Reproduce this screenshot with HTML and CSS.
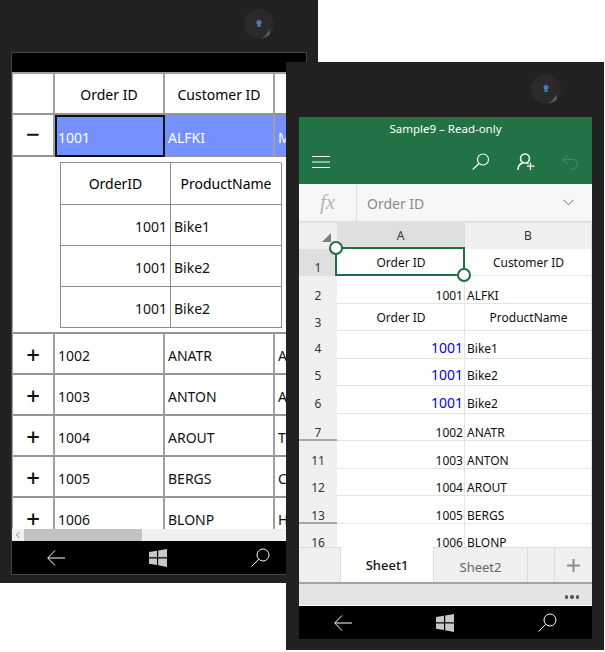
FILE: index.html
```html
<!DOCTYPE html>
<html lang="en">
<head>
  <meta charset="UTF-8">
  <title>Grid to Excel export</title>
  <link rel="stylesheet" href="styles.css">
</head>
<body>

  <!-- Phone with the data grid -->
  <div class="phone phone-grid">
    <svg class="camera" width="32" height="32" viewBox="0 0 32 32">
      <circle cx="16" cy="16" r="15" fill="#2a2a2c"/>
      <path d="M26 21 L27 26 A15 15 0 0 1 18 30.500 Q24 28 26 21Z" fill="#5f5f62"/>
      <circle cx="16" cy="14.500" r="2.500" fill="#5a6fc0"/>
      <rect x="14.500" y="17" width="3" height="2" fill="#0f9f8f"/>
    </svg>
    <div class="screen">
      <div class="topbar"></div>
      <div class="grid-body">
        <div class="grid-row row-head">
          <div class="cell"></div>
          <div class="cell head">Order ID</div>
          <div class="cell head">Customer ID</div>
          <div class="cell last"></div>
        </div>
        <div class="grid-row row-selected">
          <div class="cell toggle toggle-plain">&minus;</div>
          <div class="cell current">1001</div>
          <div class="cell">ALFKI</div>
          <div class="cell last">M</div>
        </div>
        <div class="detail">
          <div class="subgrid">
            <div class="subcell head">OrderID</div>
            <div class="subcell head">ProductName</div>
            <div class="subcell num">1001</div>
            <div class="subcell">Bike1</div>
            <div class="subcell num">1001</div>
            <div class="subcell">Bike2</div>
            <div class="subcell num">1001</div>
            <div class="subcell">Bike2</div>
          </div>
        </div>
        <div class="grid-row">
          <div class="cell toggle">+</div>
          <div class="cell">1002</div>
          <div class="cell">ANATR</div>
          <div class="cell last">A</div>
        </div>
        <div class="grid-row">
          <div class="cell toggle">+</div>
          <div class="cell">1003</div>
          <div class="cell">ANTON</div>
          <div class="cell last">A</div>
        </div>
        <div class="grid-row">
          <div class="cell toggle">+</div>
          <div class="cell">1004</div>
          <div class="cell">AROUT</div>
          <div class="cell last">T</div>
        </div>
        <div class="grid-row">
          <div class="cell toggle">+</div>
          <div class="cell">1005</div>
          <div class="cell">BERGS</div>
          <div class="cell last">C</div>
        </div>
        <div class="grid-row">
          <div class="cell toggle">+</div>
          <div class="cell">1006</div>
          <div class="cell">BLONP</div>
          <div class="cell last">H</div>
        </div>
      </div>
      <div class="scrollbar">
        <div class="scroll-arrow">
          <svg width="6" height="8" viewBox="0 0 6 8"><path d="M4.500 1 L1.500 4 L4.500 7" fill="none" stroke="#8a8a8a"/></svg>
        </div>
        <div class="scroll-thumb"></div>
      </div>
      <div class="navbar nav-left">
        <svg width="18" height="16" viewBox="0 0 18 16"><path d="M18 8H1M8 .5 L.7 8 L8 15.500" fill="none" stroke="#fff" stroke-width="1"/></svg>
        <svg width="18" height="18" viewBox="0 0 18 18"><path d="M0 3 L8 1.800 V8.300 H0Z M9.200 1.600 L18 0 V8.300 H9.200Z M0 9.600 H8 V16 L0 14.800Z M9.200 9.600 H18 V18 L9.200 16.300Z" fill="#c8c8c8"/></svg>
        <svg width="19" height="19" viewBox="0 0 19 19"><circle cx="12" cy="7" r="6" fill="none" stroke="#fff"/><path d="M7.800 11.300 L0.500 18.500" stroke="#fff"/></svg>
      </div>
    </div>
  </div>

  <!-- Phone with the exported workbook -->
  <div class="phone phone-excel">
    <svg class="camera" width="32" height="32" viewBox="0 0 32 32">
      <circle cx="16" cy="16" r="15" fill="#2a2a2c"/>
      <path d="M26 21 L27 26 A15 15 0 0 1 18 30.500 Q24 28 26 21Z" fill="#5f5f62"/>
      <circle cx="16" cy="14.500" r="2.500" fill="#5a6fc0"/>
      <rect x="14.500" y="17" width="3" height="2" fill="#0f9f8f"/>
    </svg>
    <div class="screen">
      <div class="ribbon">
        <div class="doc-title">Sample9 – Read-only</div>
        <div class="ribbon-tools">
          <svg class="menu-icon" width="18" height="12" viewBox="0 0 18 12"><path d="M0 .5H18M0 6H18M0 11.500H18" stroke="#fff" fill="none"/></svg>
          <svg class="tool" width="18" height="17" viewBox="0 0 18 17"><circle cx="11" cy="6.500" r="5.500" fill="none" stroke="#fff" stroke-width="1.200"/><path d="M7 10.500 L.7 16.500" stroke="#fff" stroke-width="1.200"/></svg>
          <svg class="tool" width="18" height="18" viewBox="0 0 18 18"><circle cx="8" cy="5.500" r="4.500" fill="none" stroke="#fff" stroke-width="1.500"/><path d="M1 17 C1 13 3 10.500 6 10 M10 10 L11.500 10.700" fill="none" stroke="#fff" stroke-width="1.500"/><path d="M13.500 9.500V17M10 13.200H17.500" stroke="#fff" stroke-width="1.300"/></svg>
          <svg class="tool" width="16" height="16" viewBox="0 0 16 16"><path d="M5.500 1 L1 5.500 L5.500 10 M1 5.500 H10.500 A4.500 4.500 0 0 1 10.500 15 H8" fill="none" stroke="#3f8a62" stroke-width="1.200"/></svg>
        </div>
      </div>
      <div class="formula-bar">
        <div class="fx">fx</div>
        <div class="formula-value">Order ID</div>
        <svg class="chevron" width="11" height="7" viewBox="0 0 11 7"><path d="M.5 .8 L5.500 5.800 L10.500 .8" fill="none" stroke="#6e6e6e"/></svg>
      </div>
      <div class="sheet">
        <div class="col-head corner"><span class="corner-mark"></span></div>
        <div class="col-head col-active">A</div>
        <div class="col-head">B</div>

        <div class="row-no row-active">1</div>
        <div class="xl mid center">Order ID</div>
        <div class="xl mid center">Customer ID</div>

        <div class="row-no">2</div>
        <div class="xl right">1001</div>
        <div class="xl">ALFKI</div>

        <div class="row-no">3</div>
        <div class="xl mid center">Order ID</div>
        <div class="xl mid center">ProductName</div>

        <div class="row-no row-tall">4</div>
        <div class="xl right link">1001</div>
        <div class="xl row-tall">Bike1</div>

        <div class="row-no row-tall">5</div>
        <div class="xl right link">1001</div>
        <div class="xl row-tall">Bike2</div>

        <div class="row-no row-tall">6</div>
        <div class="xl right link">1001</div>
        <div class="xl row-tall">Bike2</div>

        <div class="row-no row-gap">7</div>
        <div class="xl right">1002</div>
        <div class="xl">ANATR</div>

        <div class="row-no">11</div>
        <div class="xl right">1003</div>
        <div class="xl">ANTON</div>

        <div class="row-no">12</div>
        <div class="xl right">1004</div>
        <div class="xl">AROUT</div>

        <div class="row-no row-gap">13</div>
        <div class="xl right">1005</div>
        <div class="xl">BERGS</div>

        <div class="row-no">16</div>
        <div class="xl right">1006</div>
        <div class="xl">BLONP</div>

        <div class="selection">
          <span class="handle handle-start"></span>
          <span class="handle handle-end"></span>
        </div>
      </div>
      <div class="tabs">
        <div class="tab tab-spacer"></div>
        <div class="tab tab-active">Sheet1</div>
        <div class="tab tab-other">Sheet2</div>
        <div class="tab tab-gap"></div>
        <div class="tab tab-add">
          <svg width="13" height="13" viewBox="0 0 13 13"><path d="M6.500 0V13M0 6.500H13" stroke="#8c8c8c" stroke-width="2"/></svg>
        </div>
      </div>
      <div class="status">
        <span class="dot"></span><span class="dot"></span><span class="dot"></span>
      </div>
      <div class="navbar nav-right">
        <svg width="18" height="16" viewBox="0 0 18 16"><path d="M18 8H1M8 .5 L.7 8 L8 15.500" fill="none" stroke="#fff" stroke-width="1"/></svg>
        <svg width="18" height="18" viewBox="0 0 18 18"><path d="M0 3 L8 1.800 V8.300 H0Z M9.200 1.600 L18 0 V8.300 H9.200Z M0 9.600 H8 V16 L0 14.800Z M9.200 9.600 H18 V18 L9.200 16.300Z" fill="#c8c8c8"/></svg>
        <svg width="19" height="19" viewBox="0 0 19 19"><circle cx="12" cy="7" r="6" fill="none" stroke="#fff"/><path d="M7.800 11.300 L0.500 18.500" stroke="#fff"/></svg>
      </div>
    </div>
  </div>

</body>
</html>
```

FILE: styles.css
```css
body {
  margin: 0;
  background-color: white;
  font-family: "Noto Sans", "Open Sans", sans-serif;
  color: #111;
  width: 605px;
  height: 652px;
  overflow: hidden;
  position: relative;
}

/* phones lie on a free canvas and overlap */
.phone {
  position: absolute;
  background-color: #212121;
  box-sizing: border-box;
}
.phone-grid {
  left: 0;
  top: 0;
  width: 318px;
  height: 583px;
}
.phone-excel {
  left: 286px;
  top: 62px;
  width: 318px;
  height: 588px;
}
.camera {
  position: absolute;
  left: 243px;
  top: 8px;
}
.phone-excel .camera {
  left: 244px;
  top: 11px;
}

.screen {
  position: absolute;
  display: flex;
  flex-direction: column;
  overflow: hidden;
  box-sizing: border-box;
}
.phone-grid .screen {
  left: 11px;
  top: 52px;
  width: 296px;
  height: 523px;
  border: 1px solid #444;
}
.phone-excel .screen {
  left: 13px;
  top: 55px;
  width: 293px;
  height: 522px;
  background-color: white;
}

/* left phone: grid */
.topbar {
  height: 19px;
  background-color: black;
  flex: none;
}
.grid-body {
  flex: 1;
  min-height: 0;
  overflow: hidden;
  background-color: white;
  border-top: 2px solid #a0a0a0;
  border-left: 1px solid #a0a0a0;
}
.grid-row {
  display: grid;
  grid-template-columns: 42px 110px 110px 12px;
  height: 41px;
}
.row-selected {
  height: 42px;
}
.cell {
  box-sizing: border-box;
  border-right: 2px solid #a0a0a0;
  border-bottom: 2px solid #949494;
  display: flex;
  align-items: center;
  padding: 4px 0 0 3px;
  font-size: 14px;
  white-space: nowrap;
  overflow: hidden;
}
.cell.last {
  border-right: none;
}
.cell.head {
  justify-content: center;
  padding: 2px 0 0;
  color: #000;
}
.cell.toggle {
  justify-content: center;
  padding: 2px 0 0;
  font-size: 24px;
  font-weight: 500;
}
.row-selected .cell {
  background-color: #7590ff;
  color: white;
}
.row-selected .toggle-plain {
  background-color: white;
  color: #111;
  padding: 0 0 3px;
}
.row-selected .cell.current {
  border: 2px solid #111;
  padding: 2px 0 0 1px;
}
.detail {
  height: 177px;
  padding: 5px 0 0 47px;
  box-sizing: border-box;
  border-bottom: 2px solid #949494;
}
.subgrid {
  display: grid;
  grid-template-columns: 110px 111px;
  grid-template-rows: 42px 41px 41px 41px;
  width: 221px;
  box-sizing: border-box;
  border-top: 1px solid #8c8c8c;
  border-left: 1px solid #8c8c8c;
}
.subcell {
  box-sizing: border-box;
  border-right: 1px solid #8c8c8c;
  border-bottom: 1px solid #8c8c8c;
  display: flex;
  align-items: center;
  padding: 2px 0 0 3px;
  font-size: 14px;
}
.subcell.head {
  justify-content: center;
  padding: 0;
  color: #000;
}
.subcell.num {
  justify-content: flex-end;
  padding-right: 3px;
}
.scrollbar {
  height: 12px;
  flex: none;
  display: flex;
  background-color: #f0f0f0;
}
.scroll-arrow {
  width: 12px;
  display: flex;
  align-items: center;
  justify-content: center;
}
.scroll-thumb {
  width: 118px;
  background-color: #c2c2c2;
}

/* nav bar, same on both phones */
.navbar {
  flex: none;
  background-color: black;
  display: flex;
  align-items: center;
  justify-content: space-between;
}
.nav-left {
  height: 33px;
  padding: 0 36px 0 35px;
}
.nav-right {
  height: 33px;
  padding: 0 35px;
  border-top: 1px solid #fff;
}

/* right phone: ribbon */
.ribbon {
  flex: none;
  height: 67px;
  background-color: #217346;
  color: white;
}
.doc-title {
  text-align: center;
  font-size: 11.500px;
  padding-top: 4px;
  line-height: 16px;
}
.ribbon-tools {
  display: flex;
  align-items: center;
  height: 17px;
  margin-top: 16px;
  padding-left: 13px;
}
.menu-icon {
  margin-right: 142px;
}
.tool {
  margin-right: 27px;
}
.tool:last-child {
  margin-right: 0;
}

.formula-bar {
  flex: none;
  height: 38px;
  display: flex;
  align-items: center;
  background-color: #f7f7f7;
  border-bottom: 1px solid #dcdcdc;
  box-sizing: border-box;
}
.fx {
  width: 58px;
  box-sizing: border-box;
  border-right: 1px solid #e0e0e0;
  height: 100%;
  display: flex;
  align-items: center;
  justify-content: center;
  font-family: "Liberation Serif", serif;
  font-style: italic;
  font-size: 21px;
  color: #b5b5b5;
}
.formula-value {
  flex: 1;
  padding: 2px 0 0 10px;
  font-size: 14px;
  color: #8a8a8a;
}
.chevron {
  margin-right: 18px;
}

/* worksheet */
.sheet {
  flex: 1;
  min-height: 0;
  position: relative;
  overflow: hidden;
  display: grid;
  grid-template-columns: 38px 128px 127px;
  grid-auto-rows: 27.500px;
  grid-template-rows: 25.500px;
  font-size: 12px;
  border-top: 1px solid #e6e6e6;
  box-sizing: border-box;
}
.col-head {
  display: flex;
  align-items: center;
  justify-content: center;
  background-color: #f0f0f0;
  border-right: 1px solid #dcdcdc;
  box-sizing: border-box;
  color: #333;
}
.col-active {
  background-color: #dfdfdf;
}
.corner {
  position: relative;
  border-right: none;
}
.corner-mark {
  position: absolute;
  right: 6px;
  bottom: 7px;
  width: 0;
  height: 0;
  border-left: 9px solid transparent;
  border-bottom: 9px solid #7f7f7f;
}
.row-no {
  display: flex;
  align-items: flex-end;
  justify-content: center;
  background-color: #f0f0f0;
  color: #333;
  box-sizing: border-box;
}
.row-active {
  background-color: #dfdfdf;
}
.row-gap {
  box-shadow: inset 0 -2px 0 #a8a8a8;
}
.xl {
  display: flex;
  align-items: flex-end;
  padding: 0 2px;
  box-sizing: border-box;
  box-shadow: inset -1px -1px 0 #e3e3e3;
  white-space: nowrap;
}
.xl.mid {
  align-items: center;
}
.xl.center {
  justify-content: center;
}
.xl.right {
  justify-content: flex-end;
}
.xl.link {
  color: #0000ff;
  font-size: 14px;
  line-height: 17px;
  padding-bottom: 3px;
}
.row-tall {
  padding-bottom: 2px;
}

/* selection box sits over the cells */
.selection {
  position: absolute;
  left: 36px;
  top: 24px;
  width: 130px;
  height: 29px;
  border: 2px solid #1e6f42;
  box-sizing: border-box;
}
.handle {
  position: absolute;
  width: 14px;
  height: 14px;
  box-sizing: border-box;
  border: 2px solid #1e6f42;
  border-radius: 50%;
  background-color: white;
}
.handle-start {
  left: -8px;
  top: -8px;
}
.handle-end {
  right: -8px;
  bottom: -8px;
}

/* sheet tabs */
.tabs {
  flex: none;
  height: 37px;
  display: flex;
  background-color: #f0f0f0;
  border-bottom: 2px solid #a3a3a3;
  box-sizing: border-box;
}
.tab {
  box-sizing: border-box;
  border-top: 1px solid #dcdcdc;
  border-right: 1px solid #dcdcdc;
  display: flex;
  align-items: center;
  justify-content: center;
  padding-top: 1px;
  font-size: 13px;
}
.tab-spacer {
  width: 42px;
}
.tab-active {
  width: 93px;
  background-color: white;
  border-top: none;
  font-weight: 500;
}
.tab-other {
  width: 94px;
  color: #666;
  padding-top: 3px;
}
.tab-gap {
  width: 27px;
}
.tab-add {
  flex: 1;
  border-right: none;
}
.status {
  flex: none;
  height: 21px;
  display: flex;
  align-items: center;
  justify-content: flex-end;
  gap: 2px;
  padding: 5px 13px 0 0;
  box-sizing: border-box;
  background-color: #e4e4e4;
}
.dot {
  width: 3.500px;
  height: 3.500px;
  border-radius: 50%;
  background-color: #555;
}
```
